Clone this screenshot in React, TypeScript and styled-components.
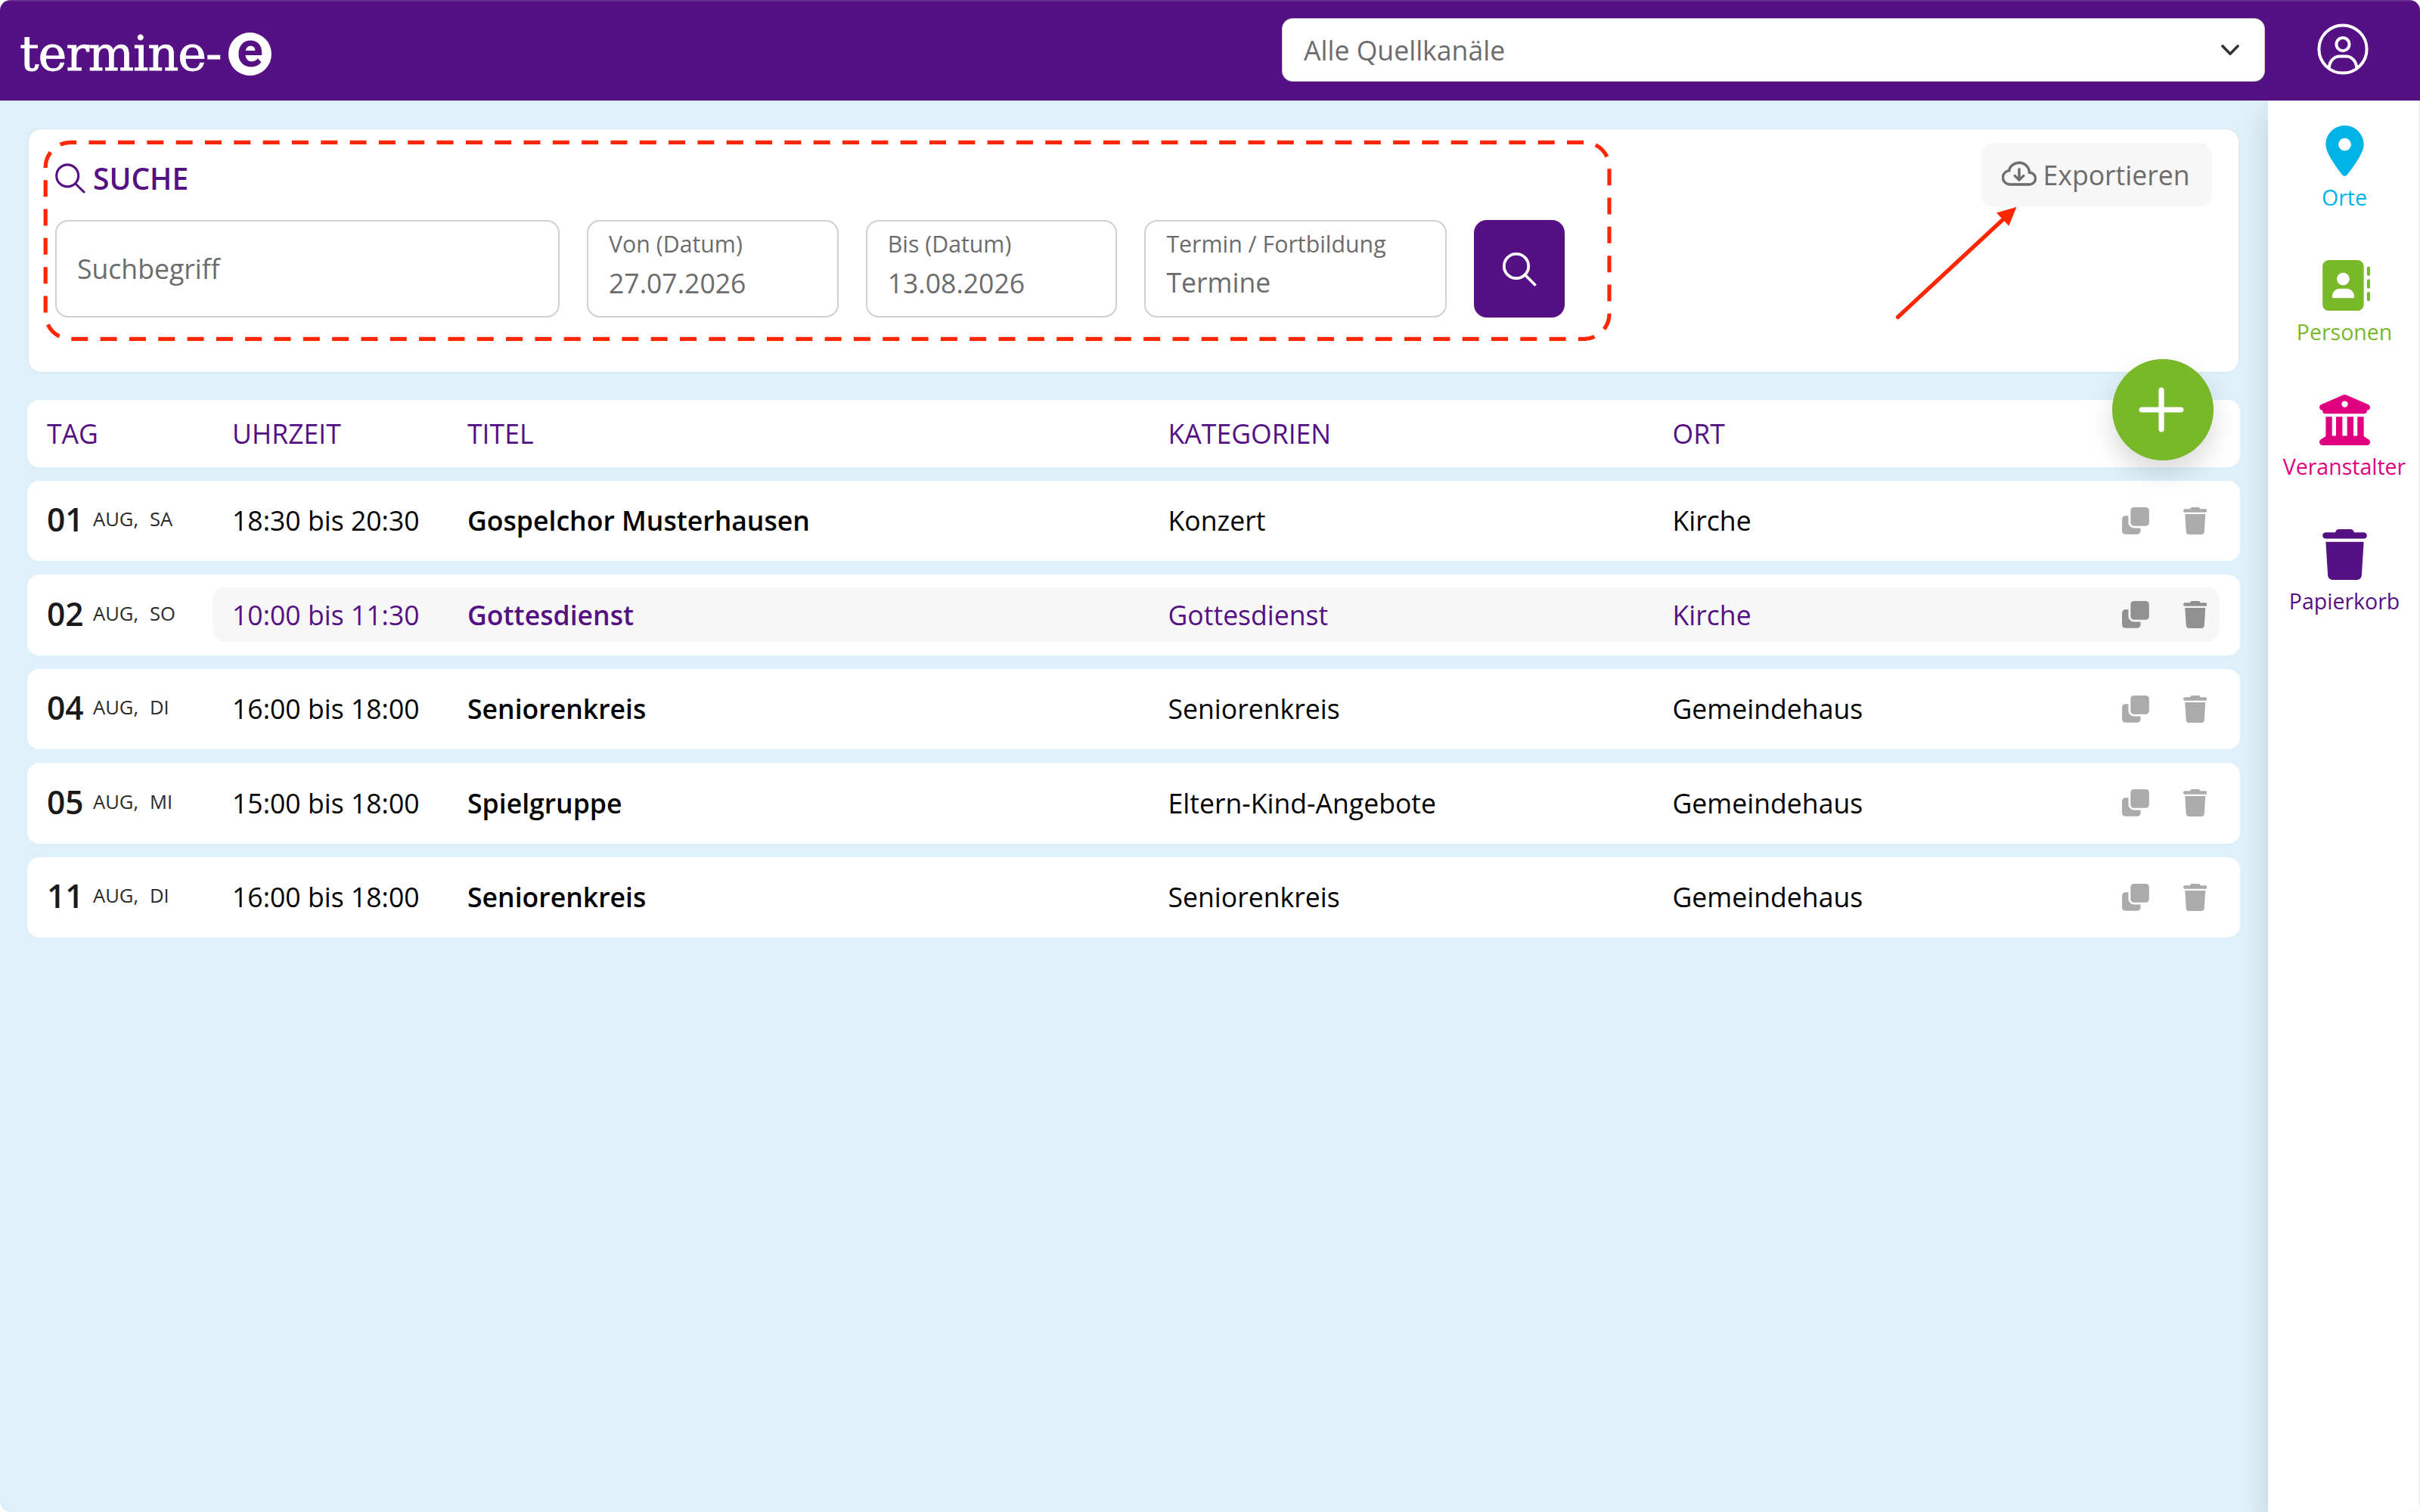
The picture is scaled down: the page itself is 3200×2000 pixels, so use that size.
import React from "react";
import styled, { createGlobalStyle } from "styled-components";
import {
  FaAddressBook,
  FaBuildingColumns,
  FaLocationDot,
  FaTrash,
} from "react-icons/fa6";
import { BsCloudArrowDown } from "react-icons/bs";

const purple = "#551183";
const green = "#78b829";
const shadow = "0 17px 33px rgba(0, 0, 0, 0.15)";

const GlobalStyle = createGlobalStyle`
  * { box-sizing: border-box; }
  body { margin: 0; background: #fff; font-family: "Open Sans", "Noto Sans", sans-serif; font-size: 35.6px; color: #000; }
`;

const Window = styled.div`
  position: relative;
  display: flex;
  flex-direction: column;
  width: 3200px;
  height: 2000px;
  overflow: hidden;
  border-radius: 14px;
  background: #def1fb;
`;

const Header = styled.header`
  position: relative;
  z-index: 2;
  display: flex;
  align-items: flex-start;
  flex: 0 0 133px;
  padding: 24px 68px 0 26px;
  background: ${purple};
  box-shadow: inset 0 2px 0 rgba(255, 255, 255, 0.12);
`;

const Logo = styled.div`
  display: flex;
  align-items: center;
  height: 95px;
  color: #fff;
`;

const LogoText = styled.span`
  width: 276px;
  font-family: "DejaVu Serif", serif;
  font-size: 64px;
  line-height: 93px;
  letter-spacing: -1.2px;
  white-space: nowrap;
  -webkit-text-stroke: 0.8px #fff;
`;

const LogoBadge = styled.span`
  display: flex;
  justify-content: center;
  width: 57px;
  height: 57px;
  border-radius: 50%;
  background: #fff;
  color: ${purple};
  font-family: Roboto, sans-serif;
  font-weight: 700;
  font-size: 64px;
  line-height: 47px;
`;

const ChannelSelect = styled.div`
  display: flex;
  align-items: center;
  justify-content: space-between;
  width: 1300px;
  height: 84px;
  margin-left: auto;
  padding: 0 33px 0 28px;
  border: 1px solid #ccc;
  border-radius: 14px;
  background: #fff;
  color: #6c6c6c;
`;

const UserButton = styled.div`
  display: flex;
  margin: 6.5px 0 0 69px;
`;

const Body = styled.div`
  display: flex;
  flex: 1;
`;

const Main = styled.main`
  flex: 1;
  padding: 38px 37px 0 36px;
`;

const SearchPanel = styled.section`
  display: flex;
  justify-content: space-between;
  align-items: flex-start;
  height: 321px;
  margin: 0 2px 37px;
  padding: 18px 35px 0 35px;
  border-radius: 16px;
  background: #fff;
  box-shadow: 0 0 3px rgba(0, 0, 0, 0.1);
`;

const SearchTitle = styled.h2`
  display: flex;
  align-items: center;
  gap: 10px;
  height: 102px;
  margin: 0;
  padding-bottom: 9px;
  color: ${purple};
  font-size: 39px;
  font-weight: 600;
`;

const FieldRow = styled.div`
  display: flex;
  gap: 36px;
`;

const Field = styled.div<{ $width: number; $single?: boolean }>`
  display: flex;
  flex-direction: column;
  justify-content: ${(p) => (p.$single ? "center" : "flex-start")};
  width: ${(p) => p.$width}px;
  height: 129px;
  padding: ${(p) => (p.$single ? "0" : "7px")} 27px 0;
  border: 2px solid #d0d0d0;
  border-radius: 17px;
  color: #6c6c6c;
`;

const FieldLabel = styled.span`
  font-size: 30.3px;
  line-height: 46px;
`;

const FieldValue = styled.span<{ $line?: number }>`
  line-height: ${(p) => p.$line ?? 57}px;
`;

const SearchButton = styled.button`
  display: flex;
  align-items: center;
  justify-content: center;
  width: 120px;
  height: 129px;
  padding: 0;
  border: 0;
  border-radius: 17px;
  background: ${purple};
`;

const ExportButton = styled.button`
  display: flex;
  align-items: center;
  gap: 8.5px;
  width: 306px;
  height: 85px;
  padding: 0 0 2px 28px;
  border: 0;
  border-radius: 18px;
  background: #f7f7f7;
  color: #6c6c6c;
  font: inherit;
`;

const ExportIcon = styled(BsCloudArrowDown)`
  width: 46px;
  height: 46px;
  stroke: currentColor;
  stroke-width: 0.2px;
`;

const List = styled.div`
  display: flex;
  flex-direction: column;
  gap: 18px;
`;

const ListHead = styled.div`
  display: flex;
  align-items: center;
  height: 88.5px;
  padding: 0 27px 0 26px;
  border-radius: 16px;
  background: #fff;
  color: ${purple};
`;

const Row = styled.div`
  display: flex;
  align-items: center;
  height: 106.5px;
  padding: 0 27px 0 26px;
  border-radius: 16px;
  background: #fff;
`;

const DateCell = styled.div`
  display: flex;
  align-items: center;
  width: 218.5px;
  padding-bottom: 4px;
`;

const HeadDate = styled.div`
  width: 218.5px;
  padding-bottom: 1px;
`;

const Day = styled.span`
  width: 61px;
  color: #1a1a1a;
  font-size: 42.5px;
  font-weight: 600;
`;

const Month = styled.span`
  width: 75px;
  color: #2b2b2b;
  font-size: 25.6px;
`;

const Entry = styled.div<{ $active?: boolean }>`
  display: flex;
  align-items: center;
  flex: 1;
  height: 72px;
  padding: 0 0 1px 26.5px;
  border-radius: 17px;
  background: ${(p) => (p.$active ? "#f7f7f7" : "transparent")};
  color: ${(p) => (p.$active ? purple : "inherit")};
`;

const Cell = styled.div<{ $width: number; $bold?: boolean }>`
  flex: none;
  width: ${(p) => p.$width}px;
  font-weight: ${(p) => (p.$bold ? 600 : 400)};
  white-space: nowrap;
`;

const Actions = styled.div<{ $active?: boolean }>`
  display: flex;
  flex: none;
  align-items: center;
  gap: 45px;
  margin-left: auto;
  padding: 1px 17px 0 0;
  color: ${(p) => (p.$active ? "#919191" : "#ababab")};
`;

const RowTrashIcon = styled(FaTrash)`
  width: 31.5px;
  height: 36px;
`;

const Sidebar = styled.nav`
  position: relative;
  display: flex;
  flex-direction: column;
  gap: 60px;
  width: 201px;
  padding-top: 33px;
  background: #fff;
  border-right: 2px solid #f0f0f0;
  box-shadow: ${shadow};
`;

const NavItem = styled.a<{ $color: string }>`
  display: flex;
  flex-direction: column;
  align-items: center;
  height: 118px;
  padding-left: 3px;
  color: ${(p) => p.$color};
  font-size: 28.5px;
  line-height: 38px;
  gap: 8.5px;
`;

const AddButton = styled.button`
  position: absolute;
  z-index: 3;
  left: 2793px;
  top: 475px;
  display: flex;
  align-items: center;
  justify-content: center;
  width: 134px;
  height: 134px;
  padding: 0 5px 0 0;
  border: 0;
  border-radius: 50%;
  background: ${green};
  box-shadow: ${shadow};
`;

const Annotations = styled.svg`
  position: absolute;
  z-index: 4;
  inset: 0;
  pointer-events: none;
`;

const CopyIcon = () => (
  <svg width="36" height="36" viewBox="0 0 36 36" fill="currentColor">
    <rect x="11.3" y="0" width="24.5" height="24.7" rx="4.5" />
    <path d="M4.5 11.2H8.4V20a7.6 7.6 0 0 0 7.6 7.6H24.5V31.3a4.5 4.5 0 0 1-4.5 4.5H4.5A4.5 4.5 0 0 1 0 31.3V15.7a4.5 4.5 0 0 1 4.5-4.5Z" />
  </svg>
);

const events = [
  { day: "01", weekday: "SA", time: "18:30 bis 20:30", title: "Gospelchor Musterhausen", category: "Konzert", place: "Kirche" },
  { day: "02", weekday: "SO", time: "10:00 bis 11:30", title: "Gottesdienst", category: "Gottesdienst", place: "Kirche", active: true },
  { day: "04", weekday: "DI", time: "16:00 bis 18:00", title: "Seniorenkreis", category: "Seniorenkreis", place: "Gemeindehaus" },
  { day: "05", weekday: "MI", time: "15:00 bis 18:00", title: "Spielgruppe", category: "Eltern-Kind-Angebote", place: "Gemeindehaus" },
  { day: "11", weekday: "DI", time: "16:00 bis 18:00", title: "Seniorenkreis", category: "Seniorenkreis", place: "Gemeindehaus" },
];

const navItems = [
  { label: "Orte", color: "#00b3e6", Icon: FaLocationDot },
  { label: "Personen", color: green, Icon: FaAddressBook },
  { label: "Veranstalter", color: "#e0007f", Icon: FaBuildingColumns },
  { label: "Papierkorb", color: purple, Icon: FaTrash },
];

export default function App() {
  return (
    <>
      <GlobalStyle />
      <Window>
        <Header>
          <Logo>
            <LogoText>termine-</LogoText>
            <LogoBadge>e</LogoBadge>
          </Logo>
          <ChannelSelect>
            <span>Alle Quellkanäle</span>
            <svg width="24" height="15" viewBox="0 0 24 15" fill="none" stroke="#333" strokeWidth="3.6" strokeLinecap="round" strokeLinejoin="round">
              <path d="M2 2 12 12.3 22 2" />
            </svg>
          </ChannelSelect>
          <UserButton>
            <svg width="68" height="68" viewBox="0 0 68 68" fill="none" stroke="#fff" strokeWidth="4">
              <circle cx="34" cy="34" r="31.6" />
              <circle cx="34" cy="27.6" r="8.6" />
              <path d="M15.8 58.5C16.5 49.5 22.5 43.6 30 43.6H38C45.5 43.6 51.5 49.5 52.2 58.5" />
            </svg>
          </UserButton>
        </Header>
        <Body>
          <Main>
            <SearchPanel>
              <div>
                <SearchTitle>
                  <svg width="40" height="40" viewBox="0 0 40 40" fill="none" stroke={purple} strokeWidth="3.1" strokeLinecap="round">
                    <circle cx="16.2" cy="16.4" r="14.5" />
                    <path d="M26.8 27 38 38" />
                  </svg>
                  SUCHE
                </SearchTitle>
                <FieldRow>
                  <Field $width={667} $single>
                    <FieldValue>Suchbegriff</FieldValue>
                  </Field>
                  <Field $width={332.7}>
                    <FieldLabel>Von (Datum)</FieldLabel>
                    <FieldValue>27.07.2026</FieldValue>
                  </Field>
                  <Field $width={332.7}>
                    <FieldLabel>Bis (Datum)</FieldLabel>
                    <FieldValue>13.08.2026</FieldValue>
                  </Field>
                  <Field $width={399.3}>
                    <FieldLabel>Termin / Fortbildung</FieldLabel>
                    <FieldValue $line={55}>Termine</FieldValue>
                  </Field>
                  <SearchButton>
                    <svg width="46" height="46" viewBox="0 0 46 46" fill="none" stroke="#fff" strokeWidth="3.8" strokeLinecap="round">
                      <circle cx="19" cy="19" r="16.2" />
                      <path d="M31 31 43.5 43.5" />
                    </svg>
                  </SearchButton>
                </FieldRow>
              </div>
              <ExportButton>
                <ExportIcon />
                Exportieren
              </ExportButton>
            </SearchPanel>
            <List>
              <ListHead>
                <HeadDate>TAG</HeadDate>
                <Entry>
                  <Cell $width={311}>UHRZEIT</Cell>
                  <Cell $width={926.5}>TITEL</Cell>
                  <Cell $width={667}>KATEGORIEN</Cell>
                  <Cell $width={400}>ORT</Cell>
                </Entry>
              </ListHead>
              {events.map((e) => (
                <Row key={e.day}>
                  <DateCell>
                    <Day>{e.day}</Day>
                    <Month>AUG,</Month>
                    <Month>{e.weekday}</Month>
                  </DateCell>
                  <Entry $active={e.active}>
                    <Cell $width={311}>{e.time}</Cell>
                    <Cell $width={926.5} $bold>{e.title}</Cell>
                    <Cell $width={667}>{e.category}</Cell>
                    <Cell $width={400}>{e.place}</Cell>
                    <Actions $active={e.active}>
                      <CopyIcon />
                      <RowTrashIcon />
                    </Actions>
                  </Entry>
                </Row>
              ))}
            </List>
          </Main>
          <Sidebar>
            {navItems.map(({ label, color, Icon }) => (
              <NavItem key={label} $color={color}>
                <Icon size={67} />
                <span>{label}</span>
              </NavItem>
            ))}
          </Sidebar>
        </Body>
        <AddButton>
          <svg width="60" height="60" viewBox="0 0 60 60" fill="none" stroke="#fff" strokeWidth="7.2" strokeLinecap="round">
            <path d="M30 4.2V55.8M4.2 30H55.8" />
          </svg>
        </AddButton>
        <Annotations width="3200" height="2000" viewBox="0 0 3200 2000" fill="none" stroke="#ff2600">
          <path
            d="M117.7 188.3H2095a33 33 0 0 1 33 33V415.3a33 33 0 0 1-33 33H93.2a33 33 0 0 1-33-33V221.3a33 33 0 0 1 33-33Z"
            strokeWidth="5.2"
            strokeDasharray="22 16.32"
          />
          <path d="M2509.5 419.5 2650 289" strokeWidth="5.2" strokeLinecap="round" />
          <path d="M2666.5 273.7 2640 281.5 2656.4 298.7Z" fill="#ff2600" stroke="none" />
        </Annotations>
      </Window>
    </>
  );
}
